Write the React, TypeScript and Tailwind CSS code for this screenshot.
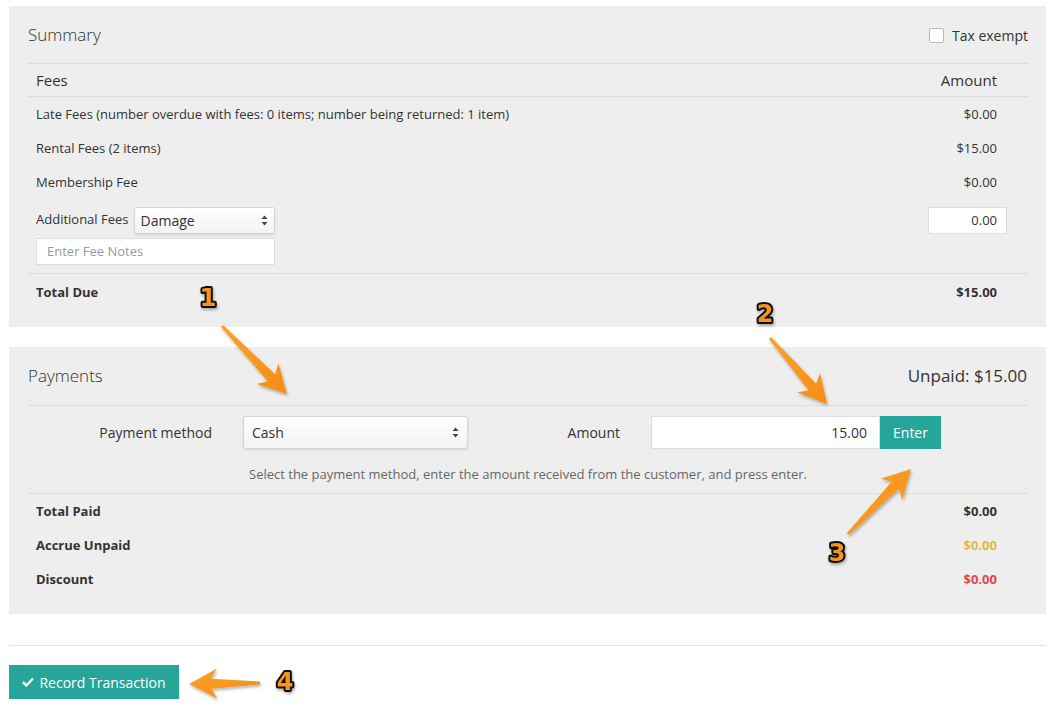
import React from 'react'

const font = { fontFamily: '"Open Sans", "Liberation Sans", sans-serif' }

function arrowPoints(x1: number, y1: number, x2: number, y2: number, w0: number, w1: number, hw: number, hl: number) {
  const len = Math.hypot(x2 - x1, y2 - y1)
  const dx = (x2 - x1) / len
  const dy = (y2 - y1) / len
  const nx = -dy
  const ny = dx
  const bx = x2 - dx * hl
  const by = y2 - dy * hl
  const sx = x2 - dx * (hl * 0.8)
  const sy = y2 - dy * (hl * 0.8)
  const pts = [
    [x1 + (nx * w0) / 2, y1 + (ny * w0) / 2],
    [sx + (nx * w1) / 2, sy + (ny * w1) / 2],
    [bx + (nx * hw) / 2, by + (ny * hw) / 2],
    [x2, y2],
    [bx - (nx * hw) / 2, by - (ny * hw) / 2],
    [sx - (nx * w1) / 2, sy - (ny * w1) / 2],
    [x1 - (nx * w0) / 2, y1 - (ny * w0) / 2],
  ]
  return pts.map((p) => p.join(',')).join(' ')
}

const arrows = [
  { a: [222, 326, 287, 394] },
  { a: [770, 338, 827, 404] },
  { a: [848, 534, 911, 469] },
  { a: [260, 683, 189, 684] },
]

const numbers = [
  { t: '1', x: 208, y: 306 },
  { t: '2', x: 765, y: 322 },
  { t: '3', x: 837, y: 561 },
  { t: '4', x: 285, y: 690 },
]

function Annotations() {
  return (
    <svg className="absolute inset-0 pointer-events-none" width={1062} height={724}>
      <defs>
        <filter id="sh" x="-20%" y="-20%" width="140%" height="140%">
          <feDropShadow dx="1" dy="2" stdDeviation="1.5" floodColor="#000" floodOpacity="0.3" />
        </filter>
        <linearGradient id="og" x1="0" y1="0" x2="1" y2="1">
          <stop offset="0" stopColor="#fba22e" />
          <stop offset="1" stopColor="#f58d14" />
        </linearGradient>
      </defs>
      {arrows.map(({ a }, i) => (
        <polygon key={i} points={arrowPoints(a[0], a[1], a[2], a[3], 3, 10, 30, 28)} fill="url(#og)" filter="url(#sh)" />
      ))}
      {numbers.map((n) => (
        <text
          key={n.t}
          x={n.x}
          y={n.y}
          textAnchor="middle"
          fontSize={24}
          fontWeight={900}
          fontFamily='"DejaVu Sans", sans-serif'
          fill="#f7941d"
          stroke="#111"
          strokeWidth={4}
          strokeLinejoin="round"
          style={{ paintOrder: 'stroke' }}
          filter="url(#sh)"
        >
          {n.t}
        </text>
      ))}
    </svg>
  )
}

function FakeSelect({ value, className }: { value: string; className: string }) {
  return (
    <div
      className={`flex items-center justify-between border border-[#d4d4d4] rounded-[3px] bg-gradient-to-b from-white to-[#f3f3f3] shadow-[0_1px_2px_rgba(0,0,0,0.12)] ${className}`}
    >
      <span>{value}</span>
      <svg width="7" height="11" viewBox="0 0 7 11">
        <path d="M3.5 0.5 L6.5 4 H0.5 Z" fill="#444" />
        <path d="M3.5 10.5 L6.5 7 H0.5 Z" fill="#444" />
      </svg>
    </div>
  )
}

function Row({ label, value, bold, valueClass, extra }: { label: string; value: string; bold?: boolean; valueClass?: string; extra?: string }) {
  return (
    <div className={`flex items-center justify-between h-[34px] pl-2 pr-[31px] text-[13px] ${bold ? 'font-bold' : ''} ${extra ?? ''}`}>
      <span>{label}</span>
      <span className={valueClass}>{value}</span>
    </div>
  )
}

export default function App() {
  return (
    <div className="relative w-[1062px] h-[724px] bg-white text-[#333] overflow-hidden" style={font}>
      {/* Summary */}
      <div className="mx-[9px] mt-[6px] w-[1037px] bg-[#eeeeee] pl-[19px] pr-[18px] pb-[17px]">
        <div className="flex items-center justify-between h-[57px]">
          <h2 className="text-[17px] font-light">Summary</h2>
          <label className="flex items-center gap-2 text-[14px] pt-[1px]">
            <span className="w-[15px] h-[15px] bg-white border border-[#bbb] rounded-[2px]" />
            Tax exempt
          </label>
        </div>
        <div className="border-t border-[#dcdcdc]">
          <div className="flex items-center justify-between h-[33px] pl-2 pr-[31px] text-[15px] border-b border-[#dcdcdc]">
            <span>Fees</span>
            <span>Amount</span>
          </div>
          <Row label="Late Fees (number overdue with fees: 0 items; number being returned: 1 item)" value="$0.00" extra="pt-[2px]" />
          <Row label="Rental Fees (2 items)" value="$15.00" extra="pt-[2px]" />
          <Row label="Membership Fee" value="$0.00" extra="pt-[2px]" />
          <div className="flex justify-between pl-2 pr-[21px] pt-[8px] pb-[8px] text-[13px] border-b border-[#dcdcdc]">
            <div className="flex flex-col gap-[4px]">
              <div className="flex items-center h-[27px]">
                <span className="mr-[5px] -mt-[2px]">Additional Fees</span>
                <FakeSelect value="Damage" className="w-[141px] h-[27px] px-[6px] text-[14px]" />
              </div>
              <div className="w-[239px] h-[27px] bg-white border border-[#ddd] flex items-center px-[10px] text-[13px] text-[#999]">
                Enter Fee Notes
              </div>
            </div>
            <div className="w-[79px] h-[27px] bg-white border border-[#ddd] flex items-center justify-end px-[9px] text-[13px]">
              0.00
            </div>
          </div>
          <Row label="Total Due" value="$15.00" bold extra="pt-[2px] h-[36px]" />
        </div>
      </div>

      {/* Payments */}
      <div className="mx-[9px] mt-[20px] w-[1037px] bg-[#eeeeee] pl-[19px] pr-[18px] pb-[18px]">
        <div className="flex items-center justify-between h-[59px] border-b border-[#dcdcdc]">
          <h2 className="text-[17px] font-light">Payments</h2>
          <span className="text-[17px] mr-[1px]">Unpaid: $15.00</span>
        </div>
        <div className="flex items-center pt-[10px] text-[14px]">
          <span className="w-[184px] text-right">Payment method</span>
          <FakeSelect value="Cash" className="ml-[31px] w-[225px] h-[33px] px-[8px] text-[14px]" />
          <span className="w-[152px] text-right">Amount</span>
          <div className="ml-[31px] w-[229px] h-[33px] bg-white border border-[#ddd] flex items-center justify-end px-[12px]">
            15.00
          </div>
          <div className="w-[61px] h-[33px] bg-[#26a69a] text-white flex items-center justify-center">Enter</div>
        </div>
        <p className="text-center text-[13px] text-[#666] h-[45px] leading-[51px] border-b border-[#dcdcdc]">
          Select the payment method, enter the amount received from the customer, and press enter.
        </p>
        <Row label="Total Paid" value="$0.00" bold extra="pt-[2px]" />
        <Row label="Accrue Unpaid" value="$0.00" bold valueClass="text-[#e0b84a]" extra="pt-[2px]" />
        <Row label="Discount" value="$0.00" bold valueClass="text-[#e8424f]" extra="pt-[2px]" />
      </div>

      <div className="ml-[9px] mt-[31px] w-[1037px] border-t border-[#e5e5e5]" />
      <button className="ml-[9px] mt-[19px] w-[170px] h-[34px] bg-[#26a69a] text-white text-[14px] flex items-center justify-center gap-[5px]">
        <svg width="12" height="10" viewBox="0 0 12 10">
          <path d="M1 5.2 L4.3 8.5 L11 1.5" fill="none" stroke="white" strokeWidth="2.4" />
        </svg>
        Record Transaction
      </button>

      <Annotations />
    </div>
  )
}
